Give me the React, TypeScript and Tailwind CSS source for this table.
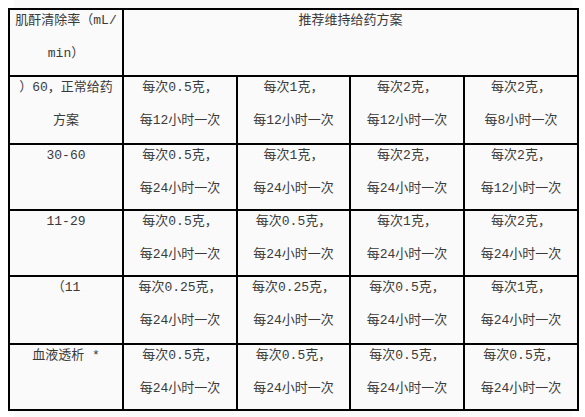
const rows: { label: string[]; cells: string[][]; tall: boolean }[] = [
  {
    label: ["）60，正常给药", "方案"],
    tall: true,
    cells: [
      ["每次0.5克，", "每12小时一次"],
      ["每次1克，", "每12小时一次"],
      ["每次2克，", "每12小时一次"],
      ["每次2克，", "每8小时一次"],
    ],
  },
  {
    label: ["30-60"],
    tall: false,
    cells: [
      ["每次0.5克，", "每24小时一次"],
      ["每次1克，", "每24小时一次"],
      ["每次2克，", "每24小时一次"],
      ["每次2克，", "每12小时一次"],
    ],
  },
  {
    label: ["11-29"],
    tall: false,
    cells: [
      ["每次0.5克，", "每24小时一次"],
      ["每次0.5克，", "每24小时一次"],
      ["每次1克，", "每24小时一次"],
      ["每次2克，", "每24小时一次"],
    ],
  },
  {
    label: ["（11"],
    tall: true,
    cells: [
      ["每次0.25克，", "每24小时一次"],
      ["每次0.25克，", "每24小时一次"],
      ["每次0.5克，", "每24小时一次"],
      ["每次1克，", "每24小时一次"],
    ],
  },
  {
    label: ["血液透析 *"],
    tall: false,
    cells: [
      ["每次0.5克，", "每24小时一次"],
      ["每次0.5克，", "每24小时一次"],
      ["每次0.5克，", "每24小时一次"],
      ["每次0.5克，", "每24小时一次"],
    ],
  },
];

function Lines({ lines }: { lines: string[] }) {
  return (
    <div className="flex flex-col gap-[16px] pt-[2px]">
      {lines.map((l, i) => (
        <div key={i} className="leading-[17px] whitespace-pre">
          {l}
        </div>
      ))}
    </div>
  );
}

export default function App() {
  return (
    <div className="w-[585px] h-[417px] bg-white overflow-hidden">
      <div className="ml-[14px] w-[558px] h-[417px] bg-[#fafafa] pt-[8px]">
        <table className="-ml-[6px] w-[569px] table-fixed border-collapse bg-[#fafafa] text-[13px] text-[#3a3a3a] font-['Liberation_Mono','Noto_Sans_CJK_SC',monospace]">
          <colgroup>
            <col className="w-[114px]" />
            <col className="w-[114px]" />
            <col className="w-[113px]" />
            <col className="w-[114px]" />
            <col className="w-[114px]" />
          </colgroup>
          <thead>
            <tr className="h-[67px]">
              <th className="border-2 border-black align-top text-center font-normal p-0">
                <Lines lines={["肌酐清除率（mL/", "min）"]} />
              </th>
              <th colSpan={4} className="border-2 border-black align-top text-center font-normal p-0">
                <Lines lines={["推荐维持给药方案"]} />
              </th>
            </tr>
          </thead>
          <tbody>
            {rows.map((r, i) => (
              <tr key={i} className={r.tall ? "h-[68px]" : "h-[66px]"}>
                <td className="border-2 border-black align-top text-center p-0">
                  <Lines lines={r.label} />
                </td>
                {r.cells.map((c, j) => (
                  <td key={j} className="border-2 border-black align-top text-center p-0">
                    <Lines lines={c} />
                  </td>
                ))}
              </tr>
            ))}
          </tbody>
        </table>
      </div>
    </div>
  );
}
